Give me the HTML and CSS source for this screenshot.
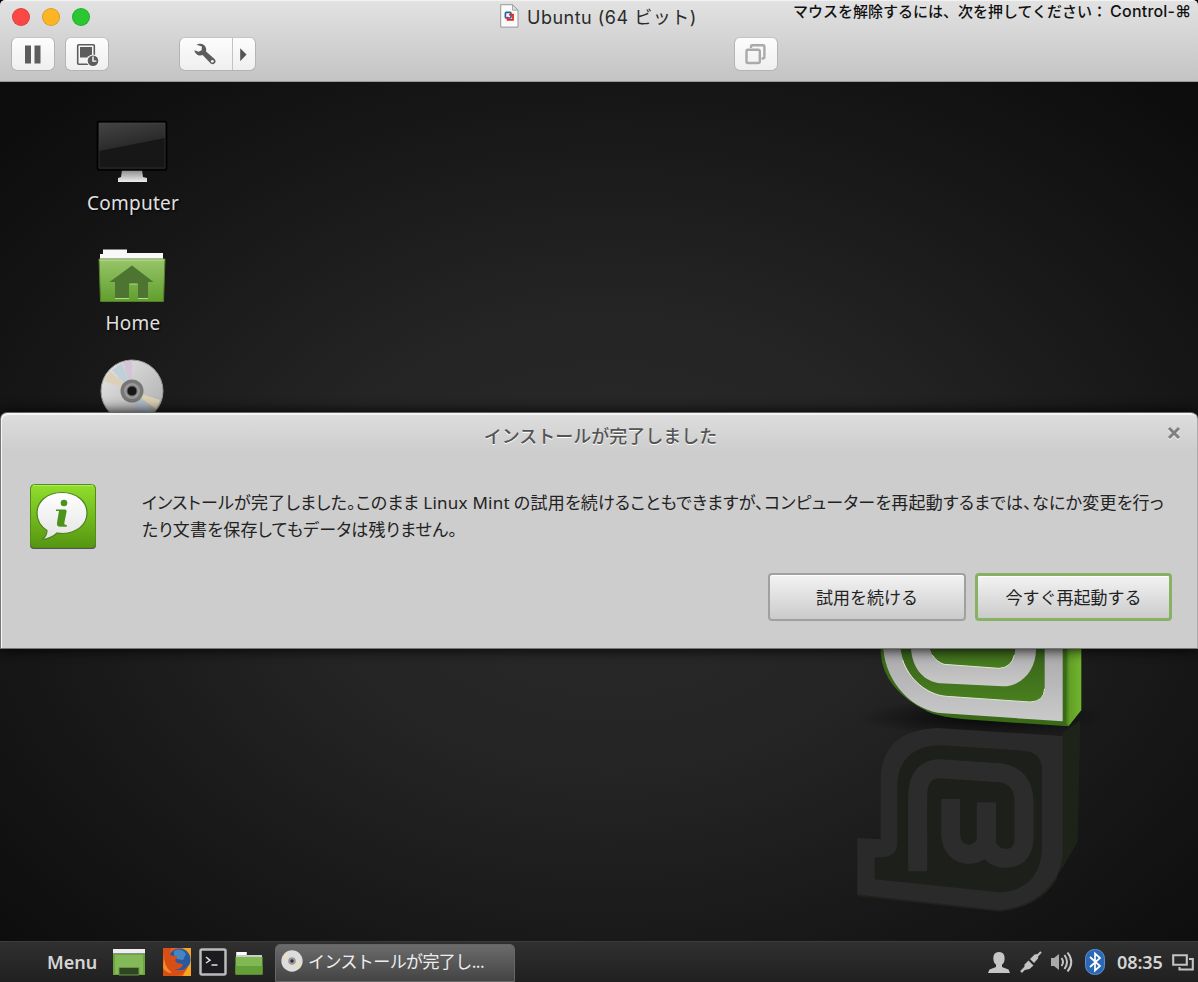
FILE: index.html
```html
<!DOCTYPE html>
<html lang="ja">
<head>
<meta charset="utf-8">
<title>Ubuntu (64 ビット)</title>
<link rel="stylesheet" href="styles.css">
</head>
<body>
<header class="titlebar">
  <div class="title-row">
    <div class="lights"><i class="light red"></i><i class="light amber"></i><i class="light green"></i></div>
    <div class="vm-title">
      <svg class="doc" width="19" height="24" viewBox="0 0 19 24"><path d="M.7.7h11.8L18 6.2v16.9H.7z" fill="#fbfbfb" stroke="#999"/><path d="M12.5.7v5.5H18z" fill="#ddd" stroke="#999" stroke-width=".8"/><rect x="5.400" y="8.400" width="5.600" height="5.600" rx="1" fill="none" stroke="#2663a5" stroke-width="1.700"/><path d="M9 10.600h4v5.200H7.600v-3" fill="none" stroke="#e3291d" stroke-width="1.800"/></svg>
      <span class="vm-name">Ubuntu (64 ビット)</span>
    </div>
    <div class="release">マウスを解除するには、次を押してください：<span class="key">Control-⌘</span></div>
  </div>
  <div class="toolbar">
    <button class="tool pause"><svg width="42" height="33" viewBox="0 0 42 33"><path d="M13 7.500h6v18h-6zM22.500 7.500h6v18h-6z" fill="#5c5c5c"/></svg></button>
    <button class="tool snap"><svg width="42" height="33" viewBox="0 0 42 33"><rect x="11.700" y="6.700" width="16.600" height="19.600" rx="1" fill="none" stroke="#5c5c5c" stroke-width="1.600"/><path d="M14 9h12v10.500H14z" fill="#5c5c5c"/><circle cx="27" cy="22.800" r="6.400" fill="#f6f6f6"/><circle cx="27" cy="22.800" r="5.300" fill="#5c5c5c"/><path d="M27 18.500v4.600h3.400" fill="none" stroke="#fff" stroke-width="1.400"/></svg></button>
    <div class="tool wrench">
      <svg width="52" height="33" viewBox="0 0 52 33"><path d="M16.500 6.800c4-2.300 8.800-.3 9.600 3.800.2 1.200.1 2-.1 3l8.300 7.200c3.200 3-.3 7-3.600 4.600l-8.100-8.300c-3.800 1.300-7.500-.8-8.200-4.900l4.200 1.500 3-1.500.3-3.700z" fill="#5c5c5c"/><circle cx="32.300" cy="23.300" r="1.400" fill="#f5f5f5"/></svg>
      <svg class="arrow" width="22" height="33" viewBox="0 0 22 33"><path d="M7.500 10l6.700 6.500-6.700 7z" fill="#555"/></svg>
    </div>
    <button class="tool unity"><svg width="42" height="33" viewBox="0 0 42 33"><g fill="none" stroke="#aaa" stroke-width="2.400"><rect x="11.500" y="11.700" width="13.300" height="13.300" rx="1.500"/><path d="M16 10V8.500q0-1.200 1.200-1.200h11q1.200 0 1.200 1.200v10.800q0 1.200-1.200 1.200H26.500"/></g></svg></button>
  </div>
</header>

<main class="desktop">
  <svg class="mint" width="270" height="290" viewBox="0 0 810 870">
    <defs>
      <linearGradient id="silver" x1="0" y1="0" x2="0" y2="1"><stop offset="0" stop-color="#a4a4a6"/><stop offset="1" stop-color="#cacacb"/></linearGradient>
      <linearGradient id="side" x1="0" y1="0" x2="1" y2="0"><stop offset="0" stop-color="#42761c"/><stop offset=".25" stop-color="#62a027"/><stop offset="1" stop-color="#72b42d"/></linearGradient>
      <linearGradient id="moss" x1="0" y1="0" x2="0" y2="1"><stop offset="0" stop-color="#345a1b"/><stop offset="1" stop-color="#49801f"/></linearGradient>
      <radialGradient id="ground"><stop offset="0" stop-color="#000" stop-opacity=".75"/><stop offset="1" stop-color="#000" stop-opacity="0"/></radialGradient>
    </defs>
    <ellipse cx="430" cy="232" rx="380" ry="56" fill="url(#ground)"/>
    <path d="M122 0v40Q130 150 265 216q35 15 110 22l310 21 37-47V0z" fill="#3a6a18"/>
    <path d="M680 0h44v210l-38 48-8-8z" fill="url(#side)"/>
    <path d="M130 0v27C138 130 220 214 310 220L668 244V0z" fill="url(#silver)"/>
    <path d="M182 0v27C190 100 250 163 320 169l250 17q42-1 44-40V0z" fill="url(#moss)"/>
    <path d="M188 60C205 115 260 165 320 169l250 17q42-1 44-40" fill="none" stroke="#dfe4d3" stroke-width="3"/>
    <path d="M213 0v27C218 90 255 126 302 130l185 9c60 0 101-50 101-112V0z" fill="url(#silver)"/>
    <path d="M270 0v27q8 34 42 46l165 12q45-2 49-58V0z" fill="url(#moss)"/>
    <path d="M277 45q12 20 35 28l165 12q38-2 46-40" fill="none" stroke="#dfe4d3" stroke-width="3"/>
    <path d="M668 280l53-40-8 365-55 95z" fill="#1d2319"/>
    <path d="M122 598V410Q130 270 290 264L668 288V640Q655 795 480 812L52 765V594z" fill="#2a2a2a"/>
    <path d="M104 652h25q43-5 43-42V430Q180 320 300 316l250 16q50 3 56 52v250Q594 750 480 757L104 718z" fill="#1d1f1b"/>
    <path d="M233 694V465Q236 386 300 386l180 12q70 10 72 85v120q-7 54-58 52-40-2-56-45-22 38-60 32-42-7-46-58V477" fill="none" stroke="#2c2c2c" stroke-width="57" stroke-linejoin="round"/>
    <path d="M439 487v130" stroke="#2c2c2c" stroke-width="58"/>
    <path d="M52 766l428 47Q600 798 652 710" fill="none" stroke="#1d241b" stroke-width="5"/>
  </svg>

  <div class="shortcuts">
    <div class="shortcut computer">
      <svg width="74" height="64" viewBox="0 0 74 64"><defs><linearGradient id="screen" x1="0" y1="0" x2=".5" y2="1"><stop offset="0" stop-color="#444"/><stop offset="1" stop-color="#252525"/></linearGradient><linearGradient id="stand" x1="0" y1="0" x2="0" y2="1"><stop offset="0" stop-color="#888"/><stop offset="1" stop-color="#eee"/></linearGradient></defs><path d="M27 50h20l1 7 4 1v4H23v-4l3-1z" fill="url(#stand)"/><rect x="2.500" y="1.500" width="69" height="48.500" rx="1.500" fill="#171717" stroke="#000" stroke-width="1.600"/><path d="M4 3h66v15L4 31z" fill="url(#screen)"/><path d="M4 3h66v45H4z" fill="none" stroke="#555" stroke-width=".8" opacity=".4"/></svg>
      <span>Computer</span>
    </div>
    <div class="shortcut home">
      <svg width="68" height="56" viewBox="0 0 68 56"><defs><linearGradient id="leaf" x1="0" y1="0" x2="0" y2="1"><stop offset="0" stop-color="#98c56a"/><stop offset="1" stop-color="#609f2c"/></linearGradient></defs><path d="M2 6h3V1.500h24V5h36v10H2z" fill="#f8f8f8"/><path d="M1 11h66l-1.500 42.500h-63z" fill="url(#leaf)" stroke="#527e2c"/><path d="M1.500 12h65" stroke="#c2dea6"/><path d="M34 17.500L55.500 34H50v16.500H40V36h-9v14.500H17V34h-5.500z" fill="#4d7431"/><path d="M17 50.500h14M40 50.500h10M31.500 36h8" stroke="#b4d695"/></svg>
      <span>Home</span>
    </div>
    <svg class="disc" width="64" height="64" viewBox="0 0 64 64"><defs><linearGradient id="disc" x1="0" y1="0" x2="1" y2="1"><stop offset="0" stop-color="#e8e8e8"/><stop offset="1" stop-color="#aaa"/></linearGradient></defs><circle cx="32" cy="32" r="31" fill="url(#disc)" stroke="#999"/><path d="M32 32L4 22l6-10z" fill="#ddd0b8"/><path d="M32 32L12 11l10-7z" fill="#bfd0d6"/><path d="M32 32L23 3l9-2z" fill="#d3c4d6"/><path d="M32 32l28 9-4 9z" fill="#dcd2b5"/><path d="M32 32l21 21-13 8z" fill="#b3bfcc"/><circle cx="32" cy="32" r="11.500" fill="#777"/><circle cx="32" cy="32" r="8" fill="#999"/><circle cx="32" cy="32" r="5" fill="#161616" stroke="#666"/></svg>
  </div>

  <section class="dialog">
    <div class="dialog-title"><h1>インストールが完了しました</h1>
      <svg class="close" width="14" height="14" viewBox="0 0 14 14"><path d="M2 3l10 10M12 3L2 13" stroke="#f4f4f4" stroke-width="3"/><path d="M2 2l10 10M12 2L2 12" stroke="#808080" stroke-width="3"/></svg>
    </div>
    <div class="message">
      <svg width="68" height="68" viewBox="0 0 68 68"><defs><linearGradient id="info" x1="0" y1="0" x2="0" y2="1"><stop offset="0" stop-color="#91df2d"/><stop offset="1" stop-color="#559610"/></linearGradient><linearGradient id="bubble" x1="0" y1="0" x2="0" y2="1"><stop offset="0" stop-color="#fff"/><stop offset="1" stop-color="#e4e4e4"/></linearGradient></defs><rect x="1" y="3" width="66" height="63" rx="4" fill="#555"/><rect x="1.500" y="1.500" width="65" height="63" rx="4" fill="url(#info)" stroke="#538d17"/><path d="M4 2.500h60" stroke="#b0eb62"/><path d="M33 9.500c15 0 25 9 25 20.500S48 50 34 50.500c-2 0-4-.2-6-.5-4 4-9 6-15 6.500 3-2 5-5 5-9C11 43 8 37 8 30 8 18.500 18 9.500 33 9.500z" fill="url(#bubble)" stroke="#4c831b" stroke-width="1.200"/><circle cx="35" cy="20" r="3.300" fill="#4c931c"/><path d="M27 26.500h9q2 0 1.500 2.500l-2.200 11q-.2 2 2.700 2l-.4 1.800h-6.300q-4 0-3.300-4l2-11.800h-3z" fill="#4c931c"/></svg>
      <div class="copy"><p class="line one">インストールが完了しました。このまま <span class="latin">Linux Mint</span> の試用を続けることもできますが、コンピューターを再起動するまでは、なにか変更を行っ</p><p class="line two">たり文書を保存してもデータは残りません。</p></div>
    </div>
    <div class="actions"><button class="choice">試用を続ける</button><button class="choice primary">今すぐ再起動する</button></div>
  </section>
</main>

<footer class="panel">
  <span class="menu">Menu</span>
  <svg class="show" width="34" height="28" viewBox="0 0 34 28"><path d="M1 6h32v21H1z" fill="#6ba53b"/><path d="M3 7h28v19H3z" fill="#84b958"/><path d="M1 1h32v4.500H1z" fill="#eee"/><path d="M7 19.500h20V27H7z" fill="#2f4721" stroke="#6c944b"/></svg>
  <svg class="fox" width="28" height="28" viewBox="0 0 28 28"><path d="M0 0h28v28H0z" fill="#e8641b"/><path d="M20 0h8v28h-8l6-13z" fill="#f7a524"/><circle cx="16.500" cy="11.500" r="11" fill="#285a9d"/><path d="M11 3q7-4 12 3l-3 6-6-1-3-4z" fill="#4585c4"/><path d="M0 0h8L7 7l8 2-3 3 2 3 6 1q-1 6-9 5 8 5 14-3Q22 28 11 28H0z" fill="#d94e15"/><path d="M1 5q-1 13 8 20Q3 25 0 20z" fill="#f58c22"/></svg>
  <svg class="term" width="28" height="28" viewBox="0 0 28 28"><rect x="1.500" y="1.500" width="25" height="25" rx="1.500" fill="#1c1c20" stroke="#bbb" stroke-width="2.500"/><path d="M7 9l4 3.300L7 15M12.500 17h6" fill="none" stroke="#e0e0e0" stroke-width="1.500"/></svg>
  <svg class="files" width="28" height="26" viewBox="0 0 28 26"><path d="M1 7V3h11v3h15v5H1z" fill="#ccc"/><path d="M2 3h9v3H2z" fill="#fff"/><path d="M.5 8h27v17.500H.5z" fill="#80b952"/><path d="M.5 17h27v8.500H.5z" fill="#659f37"/></svg>
  <div class="task"><svg width="22" height="22" viewBox="0 0 64 64"><circle cx="32" cy="32" r="31" fill="#ddd"/><path d="M32 32L5 20l9-12z" fill="#e9debf"/><path d="M32 32l28 9-9 14z" fill="#e9debf"/><circle cx="32" cy="32" r="11" fill="#999"/><circle cx="32" cy="32" r="5" fill="#333"/></svg><span>インストールが完了し...</span></div>
  <div class="tray">
    <svg class="user" width="22" height="21" viewBox="0 0 22 21"><path d="M11 0c5 0 6 4 5.500 8-.3 2-1 3.500-2.500 4.500V15l6.500 2.500L22 21H0l1.500-3.500L8 15v-2.500C6.500 11.500 5.800 10 5.500 8 5 4 6 0 11 0z" fill="#c6c6c6"/></svg>
    <svg class="plug" width="22" height="22" viewBox="0 0 22 22"><path d="M1 21l5-5" stroke="#bdbdbd" stroke-width="2.500"/><path d="M4.500 13.500l4-4 5 5-4 3.500-5 1zM10 8l4.500-4.500 4-.5-.5 4.500L14 12z" fill="#c4c4c4"/><path d="M17 5l4-4" stroke="#c4c4c4" stroke-width="2"/></svg>
    <svg class="sound" width="23" height="22" viewBox="0 0 23 22"><path d="M1 7h3l5-4v16l-5-4H1z" fill="#aaa"/><path d="M11.500 7q3 4 0 8M14.500 4q5 7 0 14M17.500 1.500q7.500 9.500 0 19" fill="none" stroke="#c4c4c4" stroke-width="2"/></svg>
    <svg class="bt" width="20" height="26" viewBox="0 0 20 26"><rect x=".5" y=".5" width="19" height="25" rx="9" fill="#2d68b5" stroke="#5f91cf"/><path d="M5 8l10 9-5 4.500V4.500L15 9 5 18" fill="none" stroke="#fff" stroke-width="1.700"/></svg>
    <span class="clock">08:35</span>
    <svg class="windows" width="22" height="17" viewBox="0 0 22 17"><path d="M1.200 1.200h13.600v9.600H1.200zM17 5h3.800v10.500H7.500V13" fill="none" stroke="#c4c4c4" stroke-width="2.100"/></svg>
  </div>
</footer>
</body>
</html>
```
FILE: styles.css
```css
* { box-sizing: border-box; }
body { margin: 0; width: 1198px; height: 982px; overflow: hidden; display: flex; flex-direction: column; background: #000; font-family: "Noto Sans", "Noto Sans CJK JP", sans-serif; }
svg { display: block; flex: none; }
button { padding: 0; font: inherit; }

.titlebar { height: 82px; flex: none; background: linear-gradient(#e2e2e2, #c4c4c4); border-top: 1px solid #f2f2f2; border-bottom: 1px solid #999; border-radius: 5px 5px 0 0; }
.title-row { height: 36px; display: flex; align-items: flex-start; padding: 7px 5px 0 12px; }
.lights { display: flex; gap: 12px; width: 488px; }
.light { width: 18px; height: 18px; border-radius: 50%; border: 1px solid #0002; }
.red { background: #fc4844; }
.amber { background: #fdb524; }
.green { background: #29c732; }
.vm-title { display: flex; width: 293px; gap: 8px; margin-top: -4px; }
.vm-name { font: 18px/27px Inter, "Noto Sans CJK JP", sans-serif; color: #2b2b2b; letter-spacing: .5px; white-space: nowrap; }
.release { font: 500 15px/22px Inter, "Noto Sans CJK JP", sans-serif; color: #111; white-space: nowrap; margin-top: -8px; }
.key { margin-left: 3px; font-size: 16px; letter-spacing: .2px; }
.toolbar { display: flex; padding: 0 12px 0 11px; }
.tool { height: 34px; display: flex; border: 1px solid #b5b5b5; border-top-color: #c5c5c5; border-radius: 6px; background: linear-gradient(#fdfdfd, #efefef); overflow: hidden; }
.pause, .snap, .unity { width: 44px; }
.snap { margin-left: 10px; }
.wrench { width: 77px; margin-left: 70px; }
.arrow { border-left: 1px solid #c2c2c2; }
.unity { margin-left: 478px; }

.desktop { position: relative; height: 859px; flex: none; background: radial-gradient(ellipse 760px 560px at 610px 460px, #2b2b2b 0, #242424 42%, #171717 78%, #0d0d0d 108%); overflow: hidden; }
.mint { position: absolute; left: 840px; top: 558px; }
.shortcuts { width: 266px; display: flex; flex-direction: column; align-items: center; padding-top: 38px; }
.shortcut { display: flex; flex-direction: column; align-items: center; color: #e0e0e0; font: 19px/26px "Noto Sans", sans-serif; letter-spacing: .25px; text-shadow: 1px 1px 2px #000; }
.computer { height: 128px; }
.computer svg { margin: 0 2px 6px 0; }
.home { height: 110px; }
.home svg { margin: 0 2px 6px 0; }
.disc { margin: 1px 3px 0 0; }

.dialog { position: absolute; left: 0; top: 330px; width: 1198px; height: 237px; border: 1px solid #777; border-top-color: #666; border-right-color: #aaa; border-radius: 7px 7px 0 0; background: linear-gradient(#dedede, #cdcdcd 38px); box-shadow: inset 1px 2px #f5f5f5, 0 0 14px #000; }
.dialog-title { display: flex; height: 70px; padding: 9px 16px 0 33px; }
.dialog-title h1 { flex: 1; margin: 0; text-align: center; font: 500 18px/27px "Noto Sans CJK JP", sans-serif; color: #555; text-shadow: 0 1px #fff; }
.close { margin-top: 4px; }
.message { display: flex; height: 90px; padding-left: 28px; gap: 45px; }
.copy { padding-top: 6px; color: #222; font: 17px/27px "Noto Sans CJK JP", sans-serif; }
.line { margin: 0; white-space: nowrap; font-feature-settings: "palt"; letter-spacing: .235px; }
.one { height: 26px; line-height: 26px; }
.latin { font-family: "Noto Sans", sans-serif; }
.actions { display: flex; justify-content: flex-end; gap: 9px; padding-right: 25px; }
.choice { width: 198px; height: 48px; border: 2px solid #a0a0a0; border-radius: 4px; color: #222; background: linear-gradient(#f3f3f3, #cbcbcb); font: 17px/24px "Noto Sans CJK JP", sans-serif; box-shadow: inset 0 1px #fff; }
.primary { width: 197px; border: 3px solid #87b163; }

.panel { height: 41px; flex: none; display: flex; align-items: center; padding: 0 4px 0 47px; border-top: 1px solid #3b3b3b; background: linear-gradient(#303030, #202020); color: #d5d5d5; }
.menu { width: 65px; font: 600 18px/26px "Noto Sans", sans-serif; }
.fox { margin-left: 17px; }
.term { margin-left: 8px; }
.files { margin-left: 8px; }
.task { width: 240px; height: 38px; align-self: flex-end; display: flex; align-items: center; gap: 5px; margin-left: 12px; padding: 0 0 4px 5px; border: 1px solid #666; border-radius: 5px 5px 0 0; background: linear-gradient(#6b6b6b, #444); font: 17px/24px "Noto Sans CJK JP", sans-serif; letter-spacing: -.6px; color: #eee; white-space: nowrap; }
.tray { display: flex; align-items: center; margin-left: auto; }
.plug { margin-left: 10px; }
.sound { margin-left: 8px; }
.bt { margin-left: 12px; }
.clock { width: 55px; margin-left: 12px; font: 600 18px/26px "Noto Sans", sans-serif; letter-spacing: -.1px; }
```
